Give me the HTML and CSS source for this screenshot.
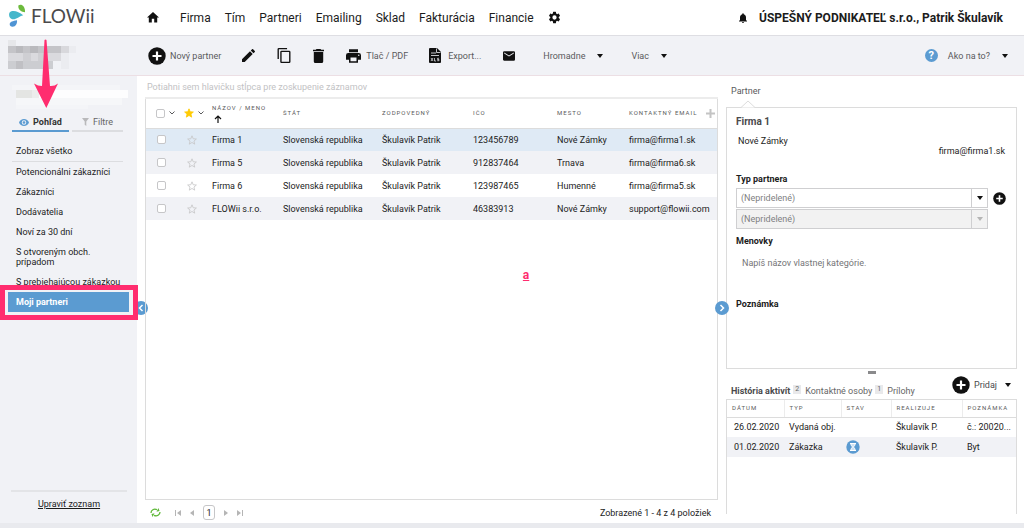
FILE: index.html
```html
<!DOCTYPE html>
<html lang="sk">
  <head>
    <meta charset="UTF-8" />
    <title>FLOWii - Partneri</title>
    <link rel="stylesheet" href="styles.css">
  </head>
  <body>
    <svg class="sprite" aria-hidden="true">
      <symbol id="plus" viewBox="0 0 18 18">
        <circle cx="9" cy="9" r="8.7" fill="#111" />
        <path d="M9 4.5v9M4.5 9h9" stroke="#fff" stroke-width="2.2" />
      </symbol>
      <symbol id="caret" viewBox="0 0 6 4"><path d="M0 0h6L3 4z" fill="currentColor" /></symbol>
      <symbol id="chevron" viewBox="0 0 6 4"><path d="M.5.5 3 3 5.500.5" fill="none" stroke="currentColor" /></symbol>
      <symbol id="star" viewBox="0 0 24 24">
        <path d="M12 2l2.900 7 7.600.6-5.800 4.900 1.800 7.400L12 17.900 5.500 21.900l1.800-7.400L1.500 9.600 9.100 9z" />
      </symbol>
    </svg>

    <header class="topbar">
      <a class="logo" href="#" aria-label="FLOWii">
        <svg width="18" height="23" viewBox="0 0 18 23">
          <path d="M9.500 1.200C12.500-.6 16.300 2 16 8.200 12 8 8.500 5 9.500 1.200z" fill="#6cba3c" />
          <path d="M.6 8.600c3.400-3.400 9-.6 13.600 2.600-4.400 1.200-6.800 4.600-11 4C.2 14.700-.6 10.600.6 8.600z" fill="#45b7cb" />
          <path d="M8 16.200c.4 3.600-1.400 6.300-4.400 6.500-1.700.1-2.900-1-2.900-2.500C.7 17.600 4 16.900 8 16.200z" fill="#4f94d4" />
        </svg>
        <span>FLOWii</span>
      </a>
      <nav class="menu">
        <a href="#" aria-label="Domov">
          <svg width="12" height="11" viewBox="2 3 20 18" preserveAspectRatio="none"><path d="M10 20v-6h4v6h5v-8h3L12 3 2 12h3v8z" fill="#111" /></svg>
        </a>
        <a href="#">Firma</a>
        <a href="#">Tím</a>
        <a href="#">Partneri</a>
        <a href="#">Emailing</a>
        <a href="#">Sklad</a>
        <a href="#">Fakturácia</a>
        <a href="#">Financie</a>
        <a href="#" aria-label="Nastavenia">
          <svg width="13" height="13" viewBox="1 1 22 22"><path fill="#111" d="M19.140 12.940c.04-.3.060-.61.060-.94s-.02-.64-.07-.94l2.030-1.580a.49.49 0 0 0 .12-.61l-1.920-3.320a.49.49 0 0 0-.59-.22l-2.390.96a7 7 0 0 0-1.620-.94l-.36-2.540a.48.48 0 0 0-.48-.41h-3.840a.48.48 0 0 0-.47.41l-.36 2.540c-.59.24-1.130.57-1.620.94l-2.390-.96a.48.48 0 0 0-.59.220L2.740 8.870a.48.48 0 0 0 .12.61l2.030 1.580a7 7 0 0 0 0 1.880l-2.030 1.580a.49.49 0 0 0-.12.61l1.920 3.320c.12.22.37.29.59.22l2.390-.96c.5.38 1.030.7 1.620.94l.36 2.540c.05.24.24.41.48.41h3.840c.24 0 .44-.17.47-.41l.36-2.540a7 7 0 0 0 1.620-.94l2.390.96c.22.08.47 0 .59-.22l1.920-3.320a.48.48 0 0 0-.12-.61zM12 15.600a3.600 3.600 0 1 1 0-7.200 3.600 3.600 0 0 1 0 7.200z" /></svg>
        </a>
      </nav>
      <div class="account">
        <svg width="8" height="10" viewBox="4 2 16 20"><path fill="#111" d="M12 22a2 2 0 0 0 2-2h-4a2 2 0 0 0 2 2zm6-6v-5c0-3.070-1.640-5.640-4.500-6.320V4a1.500 1.500 0 0 0-3 0v.68C7.630 5.360 6 7.920 6 11v5l-2 2v1h16v-1z" /></svg>
        <strong>ÚSPEŠNÝ PODNIKATEĽ s.r.o., Patrik Škulavík</strong>
      </div>
    </header>

    <div class="toolbar">
      <div class="brand">
        <svg width="80" height="32" viewBox="0 2 80 32" shape-rendering="crispEdges">
          <path d="M0 8h53v7H0z" fill="#c4c4c8" /><path d="M8 8h7v7H8zM22 8h8v7h-8z" fill="#b9b9bd" /><path d="M53 8h8v7h-8z" fill="#d8d8dc" />
          <path d="M0 15h53v8H0z" fill="#dadade" /><path d="M15 15h8v8h-8zM30 15h8v8h-8z" fill="#cfcfd3" />
          <path d="M0 23h45v8H0z" fill="#cccdd1" /><path d="M8 23h7v8H8z" fill="#c0c0c4" />
          <path d="M0 2h8v6H0z" fill="#e6e7ea" /><path d="M61 8h7v7h-7zM53 15h8v16h-8z" fill="#ebecf0" />
        </svg>
      </div>
      <button class="tool new-partner"><svg width="18" height="18"><use href="#plus" /></svg>Nový partner</button>
      <button class="tool edit" aria-label="Upraviť">
        <svg width="13" height="13" viewBox="3 3 18 18"><path fill="#111" d="M3 17.250V21h3.750L17.810 9.940l-3.750-3.750zM20.710 7.040a1 1 0 0 0 0-1.410l-2.340-2.340a1 1 0 0 0-1.410 0l-1.830 1.830 3.750 3.750z" /></svg>
      </button>
      <button class="tool copy" aria-label="Kopírovať">
        <svg width="14" height="15" viewBox="2 1 19 22"><path fill="#111" d="M16 1H4a2 2 0 0 0-2 2v14h2V3h12zm3 4H8a2 2 0 0 0-2 2v14c0 1.100.9 2 2 2h11a2 2 0 0 0 2-2V7a2 2 0 0 0-2-2zm0 16H8V7h11z" /></svg>
      </button>
      <button class="tool trash" aria-label="Zmazať">
        <svg width="11" height="14" viewBox="5 3 14 18" preserveAspectRatio="none"><path fill="#111" d="M6 19a2 2 0 0 0 2 2h8a2 2 0 0 0 2-2V7H6zM19 4h-3.500l-1-1h-5l-1 1H5v2h14z" /></svg>
      </button>
      <button class="tool print">
        <svg width="15" height="14" viewBox="2 3 20 18"><path fill="#111" d="M19 8H5a3 3 0 0 0-3 3v6h4v4h12v-4h4v-6a3 3 0 0 0-3-3zm-3 11H8v-5h8zm3-7a1 1 0 1 1 0-2 1 1 0 0 1 0 2zM18 3H6v4h12z" /></svg>
        Tlač / PDF
      </button>
      <button class="tool export">
        <svg width="12" height="15" viewBox="0 0 12 15">
          <path d="M1 0h7l4 4v10a1 1 0 0 1-1 1H1a1 1 0 0 1-1-1V1a1 1 0 0 1 1-1z" fill="#111" />
          <path d="M7.500.5v4h4M2 5h5M2 7.500h8" fill="none" stroke="#f1f2f6" stroke-width=".8" />
          <path d="M2 10l2 3M4 10l-2 3M5.500 10v3h1.500M10 10.300H8.500v1.200H10v1.200H8.200" fill="none" stroke="#f1f2f6" stroke-width=".7" />
        </svg>
        Export...
      </button>
      <button class="tool mail" aria-label="Email">
        <svg width="12" height="10" viewBox="2 4 20 16"><path fill="#111" d="M20 4H4a2 2 0 0 0-2 2v12c0 1.100.9 2 2 2h16a2 2 0 0 0 2-2V6a2 2 0 0 0-2-2zm0 4l-8 5-8-5V6l8 5 8-5z" /></svg>
      </button>
      <button class="tool drop bulk">Hromadne <svg width="6" height="4"><use href="#caret" /></svg></button>
      <button class="tool drop">Viac <svg width="6" height="4"><use href="#caret" /></svg></button>
      <button class="tool drop help">
        <span class="help-icon">?</span>
        Ako na to? <svg width="6" height="4"><use href="#caret" /></svg>
      </button>
    </div>

    <div class="main">
      <aside class="sidebar">
        <div class="search">
          <svg width="116" height="28" viewBox="0 0 116 28" shape-rendering="crispEdges">
            <path d="M0 4h108v5H0zM4 24h72v4H4z" fill="#f4f5f8" />
            <path d="M4 9h112v8H4z" fill="#fdfdfe" />
            <path d="M4 9h16v8H4z" fill="#e4e5e3" /><path d="M20 9h7v8h-7z" fill="#ecedec" />
            <path d="M4 17h106v7H4z" fill="#f6f7f9" />
          </svg>
        </div>
        <div class="side-tabs">
          <button class="side-tab active">
            <svg width="10" height="7" viewBox="1 4 22 15"><path fill="#5b9bd1" d="M12 4C7 4 2.700 7.100 1 11.500 2.700 15.900 7 19 12 19s9.300-3.100 11-7.500C21.300 7.100 17 4 12 4zm0 12.500a5 5 0 1 1 0-10 5 5 0 0 1 0 10zm0-8a3 3 0 1 0 0 6 3 3 0 0 0 0-6z" /></svg>
            Pohľad
          </button>
          <button class="side-tab">
            <svg width="7" height="8" viewBox="0 0 7 8"><path d="M0 0h7L4.300 3.600V8L2.700 6.700V3.600z" fill="#b9b9bb" /></svg>
            Filtre
          </button>
        </div>
        <ul class="views">
          <li class="all"><a href="#">Zobraz všetko</a></li>
          <li><a href="#">Potencionálni zákazníci</a></li>
          <li><a href="#">Zákazníci</a></li>
          <li><a href="#">Dodávatelia</a></li>
          <li><a href="#">Noví za 30 dní</a></li>
          <li><a href="#">S otvoreným obch. prípadom</a></li>
          <li><a href="#">S prebiehajúcou zákazkou</a></li>
          <li class="selected"><a href="#">Moji partneri</a><span class="highlight"></span></li>
        </ul>
        <div class="side-footer"><a href="#">Upraviť zoznam</a></div>
        <button class="collapse left" aria-label="Skryť ľavý panel">
          <svg width="6" height="8" viewBox="0 0 6 8"><path d="M4.500 1l-3 3 3 3" fill="none" stroke="#fff" stroke-width="1.500" /></svg>
        </button>
        <svg class="arrow" width="26" height="70" viewBox="0 0 26 70">
          <path d="M11.500 1q1-1 2 0l3.500 46q4.500.3 8-2.500L13.300 69 1 44.500q4 2.500 8 2.500z" fill="#ff2d6f" />
        </svg>
      </aside>

      <section class="list">
        <div class="group-hint">Potiahni sem hlavičku stĺpca pre zoskupenie záznamov</div>
        <div class="grid">
          <table class="partners">
            <colgroup>
              <col class="w-check"><col class="w-star"><col class="w-name"><col class="w-state">
              <col class="w-owner"><col class="w-ico"><col class="w-city"><col>
            </colgroup>
            <thead>
              <tr>
                <th><span class="pick"><input type="checkbox" aria-label="Vybrať všetko"><svg width="6" height="4"><use href="#chevron" /></svg></span></th>
                <th><span class="pick"><svg class="star on" width="10" height="10"><use href="#star" /></svg><svg width="6" height="4"><use href="#chevron" /></svg></span></th>
                <th>
                  <span class="sorted">Názov / Meno
                    <svg width="8" height="8" viewBox="0 0 8 8"><path d="M4 8V1M1 4l3-3 3 3" fill="none" stroke="#111" stroke-width="1.200" /></svg>
                  </span>
                </th>
                <th>Štát</th>
                <th>Zodpovedný</th>
                <th>IČO</th>
                <th>Mesto</th>
                <th>
                  <span class="last">Kontaktný email
                    <svg width="9" height="9" viewBox="0 0 9 9"><path d="M4.500 0v9M0 4.500h9" stroke="#c4c4c4" stroke-width="2" /></svg>
                  </span>
                </th>
              </tr>
            </thead>
            <tbody>
              <tr class="current">
                <td><input type="checkbox" aria-label="Firma 1"></td>
                <td><svg class="star" width="10" height="10"><use href="#star" /></svg></td>
                <td>Firma 1</td><td>Slovenská republika</td><td>Škulavík Patrik</td><td>123456789</td><td>Nové Zámky</td><td>firma@firma1.sk</td>
              </tr>
              <tr>
                <td><input type="checkbox" aria-label="Firma 5"></td>
                <td><svg class="star" width="10" height="10"><use href="#star" /></svg></td>
                <td>Firma 5</td><td>Slovenská republika</td><td>Škulavík Patrik</td><td>912837464</td><td>Trnava</td><td>firma@firma6.sk</td>
              </tr>
              <tr>
                <td><input type="checkbox" aria-label="Firma 6"></td>
                <td><svg class="star" width="10" height="10"><use href="#star" /></svg></td>
                <td>Firma 6</td><td>Slovenská republika</td><td>Škulavík Patrik</td><td>123987465</td><td>Humenné</td><td>firma@firma5.sk</td>
              </tr>
              <tr>
                <td><input type="checkbox" aria-label="FLOWii s.r.o."></td>
                <td><svg class="star" width="10" height="10"><use href="#star" /></svg></td>
                <td>FLOWii s.r.o.</td><td>Slovenská republika</td><td>Škulavík Patrik</td><td>46383913</td><td>Nové Zámky</td><td>support@flowii.com</td>
              </tr>
            </tbody>
          </table>
          <span class="mark">a</span>
        </div>
        <div class="pager">
          <button class="refresh" aria-label="Obnoviť">
            <svg width="11" height="9" viewBox="0 0 11 9"><path d="M1 5C1 2 4 .3 7 1.700M10 4c0 3-3 4.700-6 3.300" fill="none" stroke="#5fb83a" stroke-width="1.300" /><path d="M6.500 3.800L9.500 3 8.500 0zM4.500 5.200L1.500 6l1 3z" fill="#5fb83a" /></svg>
          </button>
          <button aria-label="Prvá"><svg width="6" height="6" viewBox="0 0 6 6"><path d="M0 0h1v6H0zM6 0v6L2 3z" fill="#b5b5b5" /></svg></button>
          <button aria-label="Predošlá"><svg width="4" height="6" viewBox="0 0 4 6"><path d="M4 0v6L0 3z" fill="#b5b5b5" /></svg></button>
          <button class="page">1</button>
          <button aria-label="Ďalšia"><svg width="4" height="6" viewBox="0 0 4 6"><path d="M0 0v6l4-3z" fill="#b5b5b5" /></svg></button>
          <button aria-label="Posledná"><svg width="6" height="6" viewBox="0 0 6 6"><path d="M5 0h1v6H5zM0 0v6l4-3z" fill="#b5b5b5" /></svg></button>
          <span class="count">Zobrazené 1 - 4 z 4 položiek</span>
        </div>
        <button class="collapse right" aria-label="Skryť pravý panel">
          <svg width="6" height="8" viewBox="0 0 6 8"><path d="M1.500 1l3 3-3 3" fill="none" stroke="#fff" stroke-width="1.500" /></svg>
        </button>
      </section>

      <section class="detail">
        <div class="detail-tab">Partner</div>
        <div class="card">
          <svg class="pointer" width="14" height="8" viewBox="0 0 14 8"><path d="M0 7.500L7 1l7 6.500" fill="#fff" stroke="#dcdcdc" /></svg>
          <h2>Firma 1</h2>
          <p class="city">Nové Zámky</p>
          <p class="email">firma@firma1.sk</p>
          <label class="caption" for="type">Typ partnera</label>
          <div class="type-row">
            <div class="selects">
              <div class="select">
                <select id="type"><option>(Nepridelené)</option></select>
                <svg width="6" height="4"><use href="#caret" /></svg>
              </div>
              <div class="select disabled">
                <select aria-label="Podtyp partnera" disabled><option>(Nepridelené)</option></select>
                <svg width="6" height="4"><use href="#caret" /></svg>
              </div>
            </div>
            <button class="add-type" aria-label="Pridať typ"><svg width="13" height="13"><use href="#plus" /></svg></button>
          </div>
          <label class="caption" for="tags">Menovky</label>
          <input class="tags" id="tags" type="text" placeholder="Napíš názov vlastnej kategórie.">
          <div class="caption">Poznámka</div>
        </div>
        <div class="splitter"></div>
        <div class="history-tabs">
          <a class="active" href="#">História aktivít</a><span class="badge">2</span>
          <a href="#">Kontaktné osoby</a><span class="badge">1</span>
          <a href="#">Prílohy</a>
          <button class="add"><svg width="18" height="18"><use href="#plus" /></svg>Pridaj <svg width="6" height="4"><use href="#caret" /></svg></button>
        </div>
        <div class="history-box">
          <table class="history">
            <colgroup><col class="h-date"><col class="h-type"><col class="h-status"><col class="h-who"><col></colgroup>
            <thead>
              <tr><th>Dátum</th><th>Typ</th><th>Stav</th><th>Realizuje</th><th>Poznámka</th></tr>
            </thead>
            <tbody>
              <tr><td>26.02.2020</td><td>Vydaná obj.</td><td></td><td>Škulavík P.</td><td>č.: 20020...</td></tr>
              <tr>
                <td>01.02.2020</td><td>Zákazka</td>
                <td><svg width="14" height="14" viewBox="0 0 14 14"><circle cx="7" cy="7" r="6.700" fill="#5b9bd1" /><path d="M4 3.500h6M4 10.500h6M4.800 3.500c0 2.500 1.500 2.500 1.500 3.500s-1.500 1-1.500 3.500h4.400c0-2.500-1.500-2.500-1.500-3.500s1.500-1 1.500-3.500" fill="#cfe2f3" stroke="#fff" /></svg></td>
                <td>Škulavík P.</td><td>Byt</td>
              </tr>
            </tbody>
          </table>
        </div>
      </section>
    </div>
    <footer class="bottom"></footer>
  </body>
</html>
```
FILE: styles.css
```css
* {
  box-sizing: border-box;
}
body {
  margin: 0;
  height: 100vh;
  display: flex;
  flex-direction: column;
  background-color: #fff;
  color: #1c1c1c;
  font-family: Roboto, "Liberation Sans", sans-serif;
  font-size: 9px;
  line-height: 10px;
  overflow: hidden;
}
a {
  color: inherit;
  text-decoration: none;
}
button {
  display: flex;
  align-items: center;
  padding: 0;
  border: none;
  background: none;
  color: inherit;
  font: inherit;
  cursor: pointer;
}
svg {
  display: block;
  flex: none;
}
.sprite {
  position: absolute;
  width: 0;
  height: 0;
}

/* top bar */
.topbar {
  display: flex;
  align-items: center;
  height: 36px;
  border-bottom: 1px solid #dedee3;
}
.logo {
  display: flex;
  align-items: center;
  gap: 4px;
  width: 147px;
  padding-left: 9px;
  padding-bottom: 4px;
  color: #4a4a4c;
  font-family: Lato, sans-serif;
  font-size: 19px;
  line-height: 24px;
}
.menu {
  display: flex;
  align-items: center;
  gap: 14px;
  font-size: 12px;
  line-height: 16px;
}
.menu a:first-child {
  margin-right: 7px;
}
.account {
  display: flex;
  align-items: center;
  gap: 12px;
  margin-left: auto;
  padding-right: 21px;
  font-size: 12px;
  line-height: 16px;
}

/* toolbar */
.toolbar {
  display: flex;
  align-items: center;
  height: 40px;
  padding-right: 16px;
  background-color: #f1f2f6;
  border-bottom: 1px solid #ecdfe4;
  color: #5a5a5c;
}
.brand {
  width: 148px;
  padding-left: 8px;
}
.tool {
  gap: 4px;
  white-space: nowrap;
}
.edit {
  margin-left: 21px;
}
.copy,
.trash,
.print {
  margin-left: 22px;
}
.print {
  gap: 5px;
}
.export {
  margin-left: 21px;
  gap: 7px;
}
.mail {
  margin-left: 22px;
}
.drop {
  margin-left: 28px;
  gap: 12px;
}
.drop svg {
  color: #111;
}
.help {
  margin-left: auto;
}
.help-icon {
  width: 13px;
  height: 13px;
  margin-right: -2px;
  border-radius: 50%;
  background-color: #5b9bd1;
  color: #fff;
  font-size: 11px;
  font-weight: bold;
  line-height: 13px;
  text-align: center;
}

.main {
  flex: 1;
  min-height: 0;
  display: grid;
  grid-template-columns: 137px minmax(0, 1fr) 306px;
}

/* sidebar */
.sidebar {
  position: relative;
  display: flex;
  flex-direction: column;
  background-color: #f1f2f6;
}
.search {
  padding: 5px 0 5px 12px;
}
.side-tabs {
  display: flex;
  gap: 3px;
  padding: 0 14px 0 12px;
}
.side-tab {
  flex: 1;
  justify-content: center;
  gap: 4px;
  height: 18px;
  border-bottom: 2px solid #dcdde0;
  color: #666;
}
.side-tab.active {
  flex: none;
  width: 57px;
  border-color: #5b9bd1;
  color: #333;
  font-weight: bold;
}
.views {
  margin: 9px 8px 0;
  padding: 0;
  list-style: none;
}
.views li {
  position: relative;
}
.views a {
  display: block;
  padding: 5px 16px 5px 8px;
}
.views .all {
  margin: 0 6px 0 4px;
  border-bottom: 1px solid #dcdde0;
}
.views .all a {
  padding-left: 4px;
}
.views li:nth-child(7) a {
  padding-right: 0;
}
.views .selected a {
  background-color: #5b9bd1;
  color: #fff;
  font-weight: bold;
}
.highlight {
  position: absolute;
  inset: -7px -9px -8px -8px;
  z-index: 1;
  border: 5px solid #ff2d6f;
}
.side-footer {
  margin: auto 10px 14px 11px;
  padding-top: 7px;
  border-top: 2px solid #e3e4e7;
  text-align: center;
}
.side-footer a {
  text-decoration: underline;
}
.arrow {
  position: absolute;
  left: 33px;
  top: -37px;
}
.collapse {
  position: absolute;
  top: 225px;
  justify-content: center;
  width: 14px;
  height: 14px;
  border-radius: 50%;
  background-color: #5b9bd1;
}
.collapse.left {
  right: -11px;
}
.collapse.right {
  right: -11px;
  z-index: 1;
}

/* partner list */
.list {
  position: relative;
  display: flex;
  flex-direction: column;
  padding-left: 8px;
}
.group-hint {
  padding: 6px 2px 5px;
  border-bottom: 2px solid #ececec;
  color: #c2c2c4;
}
.grid {
  position: relative;
  flex: 1;
  border: 1px solid #dcdcdc;
  border-top: none;
}
table {
  width: 100%;
  border-collapse: collapse;
  table-layout: fixed;
}
th,
td {
  padding: 0 0 0 8px;
  text-align: left;
  white-space: nowrap;
}
th {
  color: #5a5a5c;
  font-size: 6px;
  font-weight: normal;
  letter-spacing: 1px;
  text-transform: uppercase;
}
.partners th {
  height: 29px;
  border-bottom: 1px solid #dcdcdc;
}
.partners td {
  height: 23px;
}
.partners tbody tr:nth-child(even) {
  background-color: #f1f2f6;
}
.partners tbody .current {
  background-color: #dfeaf5;
}
.w-check {
  width: 33px;
}
.w-star {
  width: 25px;
}
.w-name {
  width: 71px;
}
.w-state {
  width: 99px;
}
.w-owner {
  width: 91px;
}
.w-ico {
  width: 84px;
}
.w-city {
  width: 72px;
}
.partners th:nth-child(-n + 2) {
  padding: 0;
}
.partners td:first-child {
  padding-left: 11px;
}
.partners input {
  display: block;
  appearance: none;
  width: 9px;
  height: 9px;
  margin: 0;
  border: 1px solid #c6c6c8;
  border-radius: 2px;
  background-color: #fff;
}
.pick {
  display: flex;
  align-items: center;
  gap: 4px;
}
th:first-child .pick {
  padding-left: 10px;
}
th:nth-child(2) .pick {
  padding-left: 5px;
}
.star {
  fill: none;
  stroke: #c6c6c8;
  stroke-width: 2px;
}
.star.on {
  fill: #ffcb05;
  stroke: #ffcb05;
}
.sorted {
  display: flex;
  flex-direction: column;
  gap: 2px;
}
.sorted svg {
  margin-left: 2px;
}
.last {
  display: flex;
  align-items: center;
  justify-content: space-between;
  padding-right: 2px;
}
.mark {
  position: absolute;
  left: 66%;
  top: 170px;
  color: #ff2d6f;
  font-size: 12px;
  font-weight: bold;
  text-decoration: underline;
  line-height: 12px;
}
.pager {
  display: flex;
  align-items: center;
  gap: 9px;
  height: 23px;
  padding: 2px 7px 0 5px;
}
.refresh {
  margin-right: 5px;
}
.page {
  justify-content: center;
  width: 12px;
  height: 15px;
  border: 1px solid #c6c6c8;
  border-radius: 3px;
}
.count {
  margin-left: auto;
}

/* partner detail */
.detail {
  display: flex;
  flex-direction: column;
  padding: 0 7px 0 8px;
}
.detail-tab {
  padding: 10px 5px 11px;
  color: #5a5a5c;
}
.card {
  position: relative;
  height: 262px;
  padding: 7px 9px;
  border: 1px solid #dcdcdc;
}
.pointer {
  position: absolute;
  left: 14px;
  top: -8px;
}
.card h2 {
  margin: 0;
  color: #4a4a4c;
  font-size: 10px;
  line-height: 14px;
}
.card p {
  margin: 0 2px;
}
.card .city {
  padding-top: 7px;
}
.card .email {
  margin-bottom: 18px;
  text-align: right;
}
.caption {
  display: block;
  font-weight: bold;
}
.type-row {
  display: flex;
  align-items: flex-start;
  gap: 5px;
  margin: 4px 0 7px;
}
.selects {
  flex: 1;
}
.select {
  position: relative;
  display: flex;
  align-items: center;
}
.select + .select {
  margin-top: 1px;
}
.select select {
  flex: 1;
  appearance: none;
  height: 20px;
  padding: 0 4px;
  border: 1px solid #cfcfd1;
  border-radius: 0;
  background: linear-gradient(#cfcfd1, #cfcfd1) right 15px top / 1px 100% no-repeat #fff;
  color: #808082;
  font: inherit;
}
.select svg {
  position: absolute;
  right: 5px;
  color: #111;
}
.select select:disabled {
  background-color: #f2f2f2;
  opacity: 1;
}
.disabled svg {
  color: #b5b5b5;
}
.add-type {
  height: 20px;
  margin-right: 1px;
}
.tags {
  display: block;
  width: 100%;
  height: 22px;
  margin: 6px 0 25px;
  padding: 0 6px;
  border: none;
  font: inherit;
}
.tags::placeholder {
  color: #757577;
}
.splitter {
  width: 8px;
  height: 3px;
  margin: 2px auto 0;
  background-color: #8a8a8c;
}
.history-tabs {
  display: flex;
  align-items: flex-end;
  gap: 3px;
  height: 25px;
  padding: 0 6px 3px 5px;
  color: #666;
}
.history-tabs .active {
  color: #4a4a4c;
  font-weight: bold;
}
.badge {
  margin: 0 1px 2px 0;
  padding: 0 2px;
  background-color: #e9e9eb;
  font-size: 7px;
  line-height: 9px;
}
.add {
  align-self: center;
  gap: 4px;
  margin-left: auto;
  color: #4a4a4c;
}
.add svg:last-child {
  margin-left: 4px;
  color: #111;
}
.history-box {
  flex: 1;
  margin-bottom: 9px;
  border: 1px solid #dcdcdc;
  border-bottom: none;
}
.history th {
  height: 17px;
  padding-left: 5px;
  border-right: 1px solid #ececec;
  border-bottom: 1px solid #dcdcdc;
}
.history th:last-child {
  border-right: none;
}
.history td {
  height: 20px;
  padding-left: 5px;
}
.history td:first-child {
  padding-left: 7px;
}
.history tbody tr:nth-child(even) {
  background-color: #f1f2f6;
}
.h-date {
  width: 57px;
}
.h-type {
  width: 57px;
}
.h-status {
  width: 50px;
}
.h-who {
  width: 71px;
}

.bottom {
  height: 5px;
  background-color: #e9eaee;
}
```
